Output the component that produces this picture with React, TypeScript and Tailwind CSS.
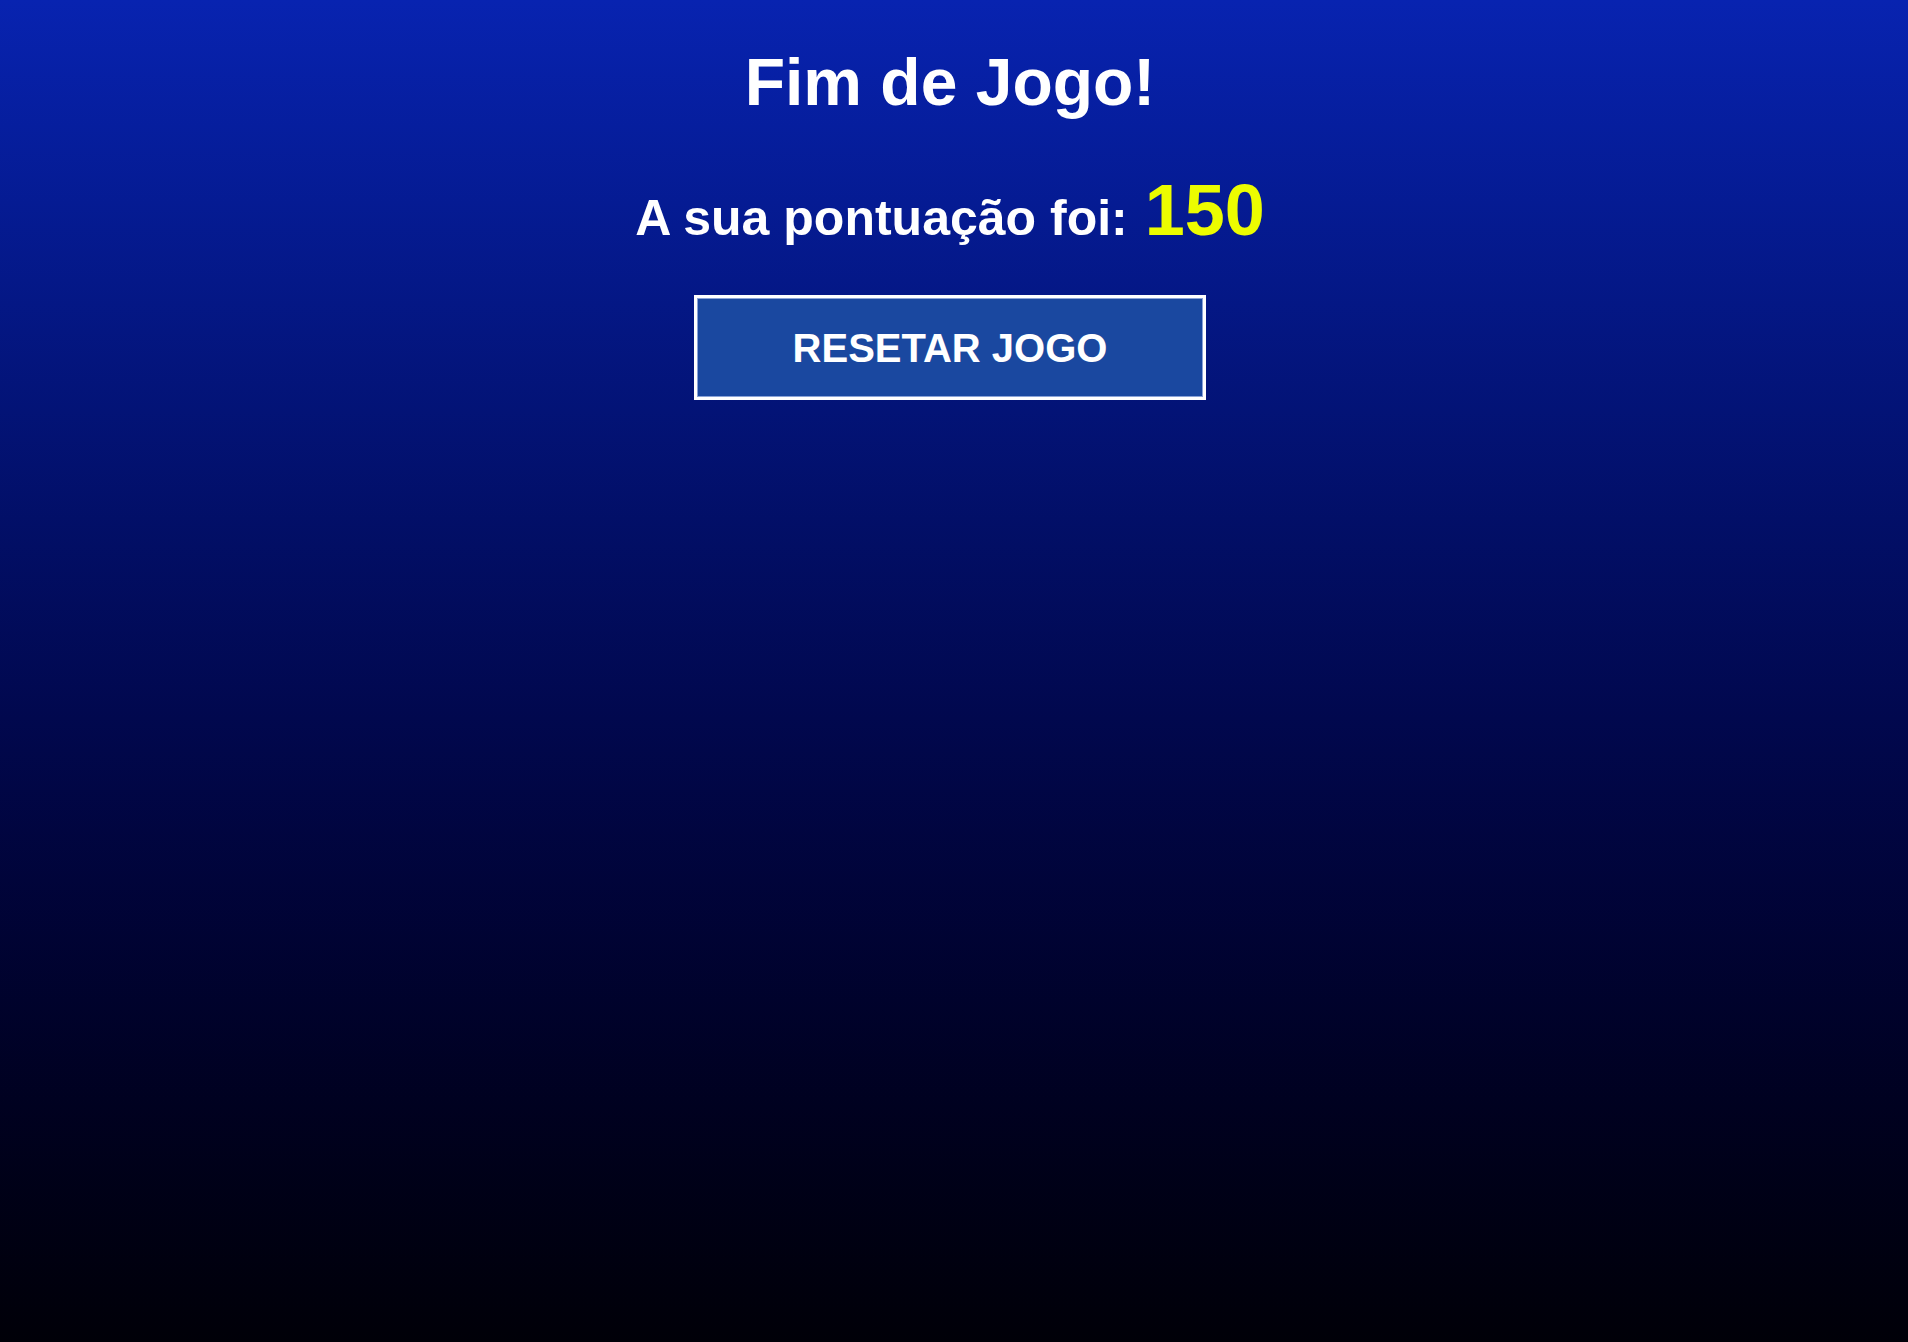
const App: React.FC = () => {
  return (
    <div className="min-h-screen w-full bg-gradient-to-b from-[#0823b0] to-[#000008] font-['Liberation_Sans',Arial,sans-serif] text-white">
      <div className="flex flex-col items-center pt-[49px] pr-[8px]">
        {/* Title */}
        <h1 className="text-[66px] font-bold leading-none">Fim de Jogo!</h1>

        {/* Score */}
        <div className="mt-[59px] flex items-baseline gap-[17px] font-bold">
          <span className="text-[50px] leading-none">A sua pontuação foi:</span>
          <span className="text-[72px] leading-none text-[#ecfc00]">150</span>
        </div>

        {/* Reset */}
        <button className="mt-[49px] flex h-[105px] w-[512px] items-center justify-center border-[3px] border-white bg-[#1a48a0] text-[40px] font-bold text-white shadow-[inset_0_0_0_1px_#8aa3d8]">
          RESETAR JOGO
        </button>
      </div>
    </div>
  );
};

export default App;
